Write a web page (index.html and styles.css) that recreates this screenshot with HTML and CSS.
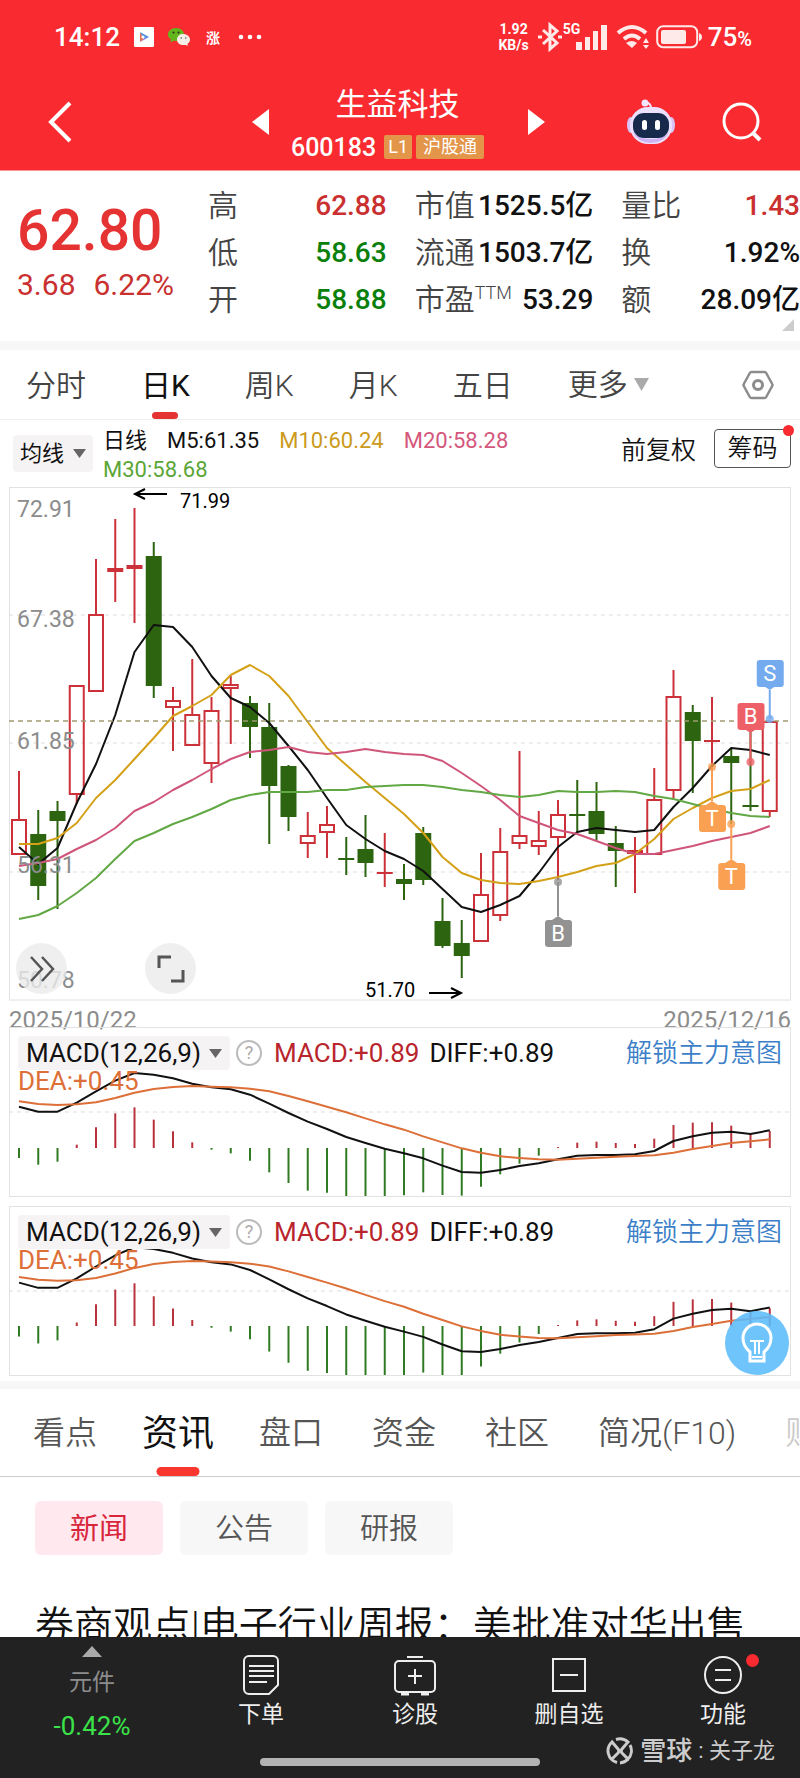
FILE: index.html
```html
<!DOCTYPE html>
<html lang="zh-CN">

<head>
  <meta charset="UTF-8">
  <meta name="viewport" content="width=device-width, initial-scale=1.0">
  <title>生益科技 600183</title>
  <link rel="stylesheet" href="styles.css">
</head>

<body>
  <div class="app">
    <header class="top">
      <div class="status">
        <span class="clock">14:12</span>
        <svg width="20" height="20" viewBox="0 0 20 20">
          <rect width="20" height="20" rx="1" fill="#fff" />
          <path d="M6 5v10l4-3z" fill="#e8705a" />
          <path d="M6 5l9 5-5 2z" fill="#4a8fe0" />
          <path d="M10 12l5-2-9 5z" fill="#7a58c8" />
          <circle cx="9" cy="10" r="1.6" fill="#fff" />
        </svg>
        <svg width="22" height="20" viewBox="0 0 22 20">
          <path d="M8 1c5 0 8 3 8 6.500s-3 6.500-8 6.500l-2.500-.3L2.500 15.500l.5-3C1 11 0 9.500 0 7.500 0 4 3 1 8 1z" fill="#63b51d" />
          <path d="M15 7c4 0 7 2.500 7 5.500 0 2-1 3.500-2.500 4.300l.3 2L17.500 18c-5.500.6-8.500-2-8.500-5.500S12 7 15 7z" fill="#f6efe8" />
          <circle cx="5.500" cy="5.500" r="1" fill="#222" />
          <circle cx="10.500" cy="5.500" r="1" fill="#222" />
          <circle cx="13.200" cy="11" r=".8" fill="#555" />
          <circle cx="17.800" cy="11" r=".8" fill="#555" />
        </svg>
        <span class="limit-up">涨</span>
        <svg width="24" height="6" viewBox="0 0 24 6" fill="#fff">
          <circle cx="3" cy="3" r="2.300" />
          <circle cx="12" cy="3" r="2.300" />
          <circle cx="21" cy="3" r="2.300" />
        </svg>
        <span class="net-speed">1.92<br>KB/s</span>
        <svg width="26" height="30" viewBox="0 0 26 30" fill="none" stroke="#ffeaea" stroke-width="3">
          <path d="M6 8l14 13-7 6V3l7 6L6 22" />
          <path d="M1 15h4M21 15h4" />
        </svg>
        <span class="signal">
          <span class="gen">5G</span>
          <svg width="31" height="25" viewBox="0 0 31 25" fill="#ffeaea">
            <path d="M0 17h6v8H0zM9 12h5v13H9zM17 6h5v19h-5zM25 0h6v25h-6z" />
          </svg>
        </span>
        <svg width="34" height="26" viewBox="0 0 34 26" fill="none" stroke="#ffeaea" stroke-width="4">
          <path d="M2 9q14-12 28 0M8 15q8-7 16 0" />
          <path d="M10 19q6-4 11 0l-5 5z" fill="#ffeaea" stroke="none" />
          <path d="M30 14l3 5h-6zM30 25l3-4h-6z" fill="#ffeaea" stroke="none" />
        </svg>
        <svg width="46" height="24" viewBox="0 0 46 24">
          <rect x="1.200" y="1.200" width="40" height="21" rx="6" fill="none" stroke="#ffeaea" stroke-width="2" />
          <rect x="5" y="5" width="25" height="14" rx="2" fill="#ffeaea" />
          <path d="M43 8q3 1 3 4t-3 4z" fill="#ffeaea" />
        </svg>
        <span class="battery">75<small>%</small></span>
      </div>

      <nav class="title-bar">
        <button class="icon-btn back" aria-label="返回">
          <svg width="24" height="42" viewBox="0 0 24 42" fill="none" stroke="#fff" stroke-width="4">
            <path d="M22 2L3 21l19 19" />
          </svg>
        </button>
        <button class="icon-btn" aria-label="上一只">
          <svg width="17" height="26" viewBox="0 0 17 26" fill="#fff">
            <path d="M17 0v26L0 13z" />
          </svg>
        </button>
        <div class="stock">
          <h1>生益科技</h1>
          <p><span class="code">600183</span><span class="tag">L1</span><span class="tag wide">沪股通</span></p>
        </div>
        <button class="icon-btn" aria-label="下一只">
          <svg width="17" height="26" viewBox="0 0 17 26" fill="#fff">
            <path d="M0 0v26l17-13z" />
          </svg>
        </button>
        <button class="icon-btn robot" aria-label="智能助手">
          <svg width="48" height="46" viewBox="0 0 48 46">
            <circle cx="18" cy="4" r="3.500" fill="#f3e4ff" />
            <path d="M18 4q6-1 6 6" fill="none" stroke="#f3e4ff" stroke-width="2" />
            <ellipse cx="4" cy="26" rx="4" ry="8" fill="#d9c4f5" />
            <ellipse cx="44" cy="26" rx="4" ry="8" fill="#d9c4f5" />
            <rect x="3" y="8" width="42" height="37" rx="18" fill="#ece2ff" />
            <path d="M5 32q6 12 19 12t19-12q-6 8-19 8T5 32z" fill="#cdb4f2" />
            <rect x="6" y="14" width="36" height="25" rx="11" fill="#182a4c" />
            <rect x="15" y="21" width="5" height="10" rx="2.500" fill="#fff" />
            <rect x="28" y="21" width="5" height="10" rx="2.500" fill="#fff" />
          </svg>
        </button>
        <button class="icon-btn" aria-label="搜索">
          <svg width="40" height="40" viewBox="0 0 40 40" fill="none" stroke="#fff" stroke-width="3">
            <circle cx="19" cy="19" r="17" />
            <path d="M31 31l7 7" stroke-width="4" />
          </svg>
        </button>
      </nav>
    </header>

    <main class="content">
      <section class="quote">
        <div class="price">
          <strong>62.80</strong>
          <p><span>3.68</span><span>6.22%</span></p>
        </div>
        <dl>
          <div><dt>高</dt><dd class="up">62.88</dd></div>
          <div><dt>低</dt><dd class="down">58.63</dd></div>
          <div><dt>开</dt><dd class="down">58.88</dd></div>
        </dl>
        <dl>
          <div><dt>市值</dt><dd>1525.5亿</dd></div>
          <div><dt>流通</dt><dd>1503.7亿</dd></div>
          <div><dt>市盈<sup>TTM</sup></dt><dd>53.29</dd></div>
        </dl>
        <dl>
          <div><dt>量比</dt><dd class="up">1.43</dd></div>
          <div><dt>换</dt><dd>1.92%</dd></div>
          <div><dt>额</dt><dd>28.09亿</dd></div>
        </dl>
        <span class="corner"></span>
      </section>

      <nav class="periods">
        <button>分时</button>
        <button class="active">日K</button>
        <button>周K</button>
        <button>月K</button>
        <button>五日</button>
        <label class="picker more">
          <select aria-label="更多周期"><option>更多</option></select>
          <svg width="15" height="13" viewBox="0 0 15 13" fill="#aaa"><path d="M0 0h15L7.500 13z" /></svg>
        </label>
        <button class="settings" aria-label="设置">
          <svg width="32" height="30" viewBox="0 0 32 30" fill="none" stroke="#8c8c8c" stroke-width="2.500">
            <path d="M9.500 2h13a2 2 0 0 1 1.700 1l6 11a2 2 0 0 1 0 2l-6 11a2 2 0 0 1-1.700 1h-13a2 2 0 0 1-1.700-1l-6-11a2 2 0 0 1 0-2l6-11a2 2 0 0 1 1.700-1z" />
            <circle cx="16" cy="15" r="4.500" stroke-width="3" />
          </svg>
        </button>
      </nav>

      <section class="averages">
        <label class="picker chip">
          <select aria-label="主图指标"><option>均线</option></select>
          <svg width="13" height="9" viewBox="0 0 13 9" fill="#666"><path d="M0 0h13L6.500 9z" /></svg>
        </label>
        <div class="legend">
          <span>日线</span>
          <span>M5:61.35</span>
          <span class="m10">M10:60.24</span>
          <span class="m20">M20:58.28</span>
          <span class="m30">M30:58.68</span>
        </div>
        <button class="adjust">前复权</button>
        <button class="chips-btn">筹码</button>
      </section>

      <section class="kline">
        <svg id="kline" viewBox="9 486 782 515"></svg>
        <div class="kline-tools">
          <button aria-label="展开">
            <svg width="26" height="26" viewBox="0 0 26 26" fill="none" stroke="#555" stroke-width="2.500">
              <path d="M2 1l11 12L2 25M13 1l11 12-11 12" />
            </svg>
          </button>
          <button aria-label="全屏">
            <svg width="28" height="28" viewBox="0 0 28 28" fill="none" stroke="#555" stroke-width="3">
              <path d="M2 13V2h12M26 15v11H14" />
            </svg>
          </button>
        </div>
      </section>
      <div class="dates"><time>2025/10/22</time><time>2025/12/16</time></div>

      <section class="macd">
        <svg id="macd-1" viewBox="9 0 782 170"></svg>
        <div class="macd-head">
          <label class="picker chip">
            <select aria-label="副图指标一"><option>MACD(12,26,9)</option></select>
            <svg width="13" height="9" viewBox="0 0 13 9" fill="#666"><path d="M0 0h13L6.500 9z" /></svg>
          </label>
          <button class="help" aria-label="说明">?</button>
          <span class="bar">MACD:+0.89</span>
          <span>DIFF:+0.89</span>
          <a href="#unlock">解锁主力意图</a>
          <span class="dea">DEA:+0.45</span>
        </div>
      </section>

      <section class="macd">
        <svg id="macd-2" viewBox="9 0 782 170"></svg>
        <div class="macd-head">
          <label class="picker chip">
            <select aria-label="副图指标二"><option>MACD(12,26,9)</option></select>
            <svg width="13" height="9" viewBox="0 0 13 9" fill="#666"><path d="M0 0h13L6.500 9z" /></svg>
          </label>
          <button class="help" aria-label="说明">?</button>
          <span class="bar">MACD:+0.89</span>
          <span>DIFF:+0.89</span>
          <a href="#unlock">解锁主力意图</a>
          <span class="dea">DEA:+0.45</span>
        </div>
        <button class="bulb" aria-label="提示">
          <svg width="32" height="42" viewBox="0 0 32 42" fill="none" stroke="#fff" stroke-width="3">
            <path d="M9 39V30C4 26 2 21 2 16a14 14 0 0 1 28 0c0 5-2 10-7 14v9z" />
            <path d="M9 19h14M14 19v13M18 19v13" stroke-width="2" />
            <path d="M11 35h10" stroke-width="2" />
          </svg>
        </button>
      </section>

      <nav class="info-tabs">
        <button>看点</button>
        <button class="active">资讯</button>
        <button>盘口</button>
        <button>资金</button>
        <button>社区</button>
        <button>简况(F10)</button>
        <button>财务</button>
      </nav>

      <div class="filters">
        <button class="active">新闻</button>
        <button>公告</button>
        <button>研报</button>
      </div>

      <a class="headline" href="#news">券商观点|电子行业周报：美批准对华出售</a>
    </main>

    <footer class="dock">
      <a class="sector" href="#sector">
        <svg width="20" height="11" viewBox="0 0 20 11" fill="#aaa"><path d="M10 0l10 11H0z" /></svg>
        <span>元件</span>
        <b>-0.42%</b>
      </a>
      <button>
        <svg width="38" height="42" viewBox="0 0 38 42" fill="none" stroke="#eee" stroke-width="2">
          <path d="M7 2h24a5 5 0 0 1 5 5v24l-9 9H7a5 5 0 0 1-5-5V7a5 5 0 0 1 5-5z" />
          <path d="M7 12h25M7 17h25M7 22h25M7 28h18" />
        </svg>
        下单
      </button>
      <button>
        <svg width="44" height="42" viewBox="0 0 44 42" fill="none" stroke="#eee" stroke-width="2">
          <rect x="2" y="7" width="40" height="31" rx="4" />
          <path d="M14 3h16M22 15v15M15 22h14" />
          <path d="M8 40h8M28 40h8" stroke-width="3" />
        </svg>
        诊股
      </button>
      <button>
        <svg width="36" height="42" viewBox="0 0 36 42" fill="none" stroke="#eee" stroke-width="2">
          <rect x="2" y="5" width="32" height="32" />
          <path d="M9 21h18" />
        </svg>
        删自选
      </button>
      <button class="dot">
        <svg width="40" height="42" viewBox="0 0 40 42" fill="none" stroke="#eee" stroke-width="2">
          <circle cx="20" cy="21" r="18" />
          <path d="M12 16h16M12 26h16" />
        </svg>
        功能
      </button>
      <span class="home-bar"></span>
      <span class="watermark">
        <svg width="28" height="28" viewBox="0 0 28 28" fill="none" stroke="#ccc" stroke-width="3">
          <path d="M11 25.500A12 12 0 0 1 6 5l6 7a3 3 0 0 1 0 4l-6 6" />
          <path d="M10 2.500A12 12 0 0 1 22 5l-6 7a3 3 0 0 0 0 4l6 6A12 12 0 0 0 24 8" />
          <path d="M14 26a12 12 0 0 0 8-4" />
        </svg>
        <b>雪球</b>: 关子龙
      </span>
    </footer>
  </div>

  <script src="charts.js"></script>
</body>

</html>
```
FILE: styles.css
```css
:root {
  --red: #f92b31;
  --up: #c9302f;
  --down: #0a800a;
  --ink: #111;
  --text: #444;
  --muted: #8c8c8c;
  --line: #e2e2e2;
  --band: #f7f7f7;
  --cjk: "Noto Sans CJK SC";
}

* {
  box-sizing: border-box;
}

body {
  margin: 0;
  background: #fff;
  color: var(--ink);
  font-family: Roboto, var(--cjk), sans-serif;
}

h1,
p,
dl,
dd {
  margin: 0;
}

button,
select {
  margin: 0;
  padding: 0;
  border: 0;
  background: none;
  color: inherit;
  font: inherit;
  appearance: none;
}

a {
  color: inherit;
  text-decoration: none;
}

svg {
  display: block;
  flex: none;
}

.app {
  display: flex;
  flex-direction: column;
  height: 100vh;
}

/* header */
.top {
  flex: none;
  background: var(--red);
  color: #fff;
  border-bottom: 1px solid #f2969a;
}

.status {
  display: flex;
  align-items: center;
  height: 74px;
  padding: 0 48px 0 54px;
}

.clock {
  margin-right: 14px;
  font-size: 26px;
  font-weight: 500;
}

.limit-up {
  margin: 0 18px 0 16px;
  font-size: 14px;
  font-weight: 700;
}

.status svg + svg {
  margin-left: 14px;
}

.net-speed {
  margin: 0 8px 0 auto;
  font-size: 14px;
  font-weight: 700;
  line-height: 16px;
  text-align: center;
}

.signal {
  display: flex;
  position: relative;
  padding-left: 13px;
  margin-right: 9px;
}

.gen {
  position: absolute;
  left: 0;
  top: -4px;
  font-size: 14px;
  font-weight: 700;
}

.status .signal ~ svg {
  margin-left: 0;
  margin-right: 6px;
}

.battery {
  font-size: 26px;
  font-weight: 500;
}

.battery small {
  font-size: 20px;
}

.title-bar {
  display: flex;
  align-items: center;
  height: 96px;
  padding: 0 38px 0 48px;
}

.back {
  margin-right: auto;
}

.stock {
  margin: 0 44px 0 22px;
  padding-top: 10px;
  text-align: center;
}

.stock h1 {
  padding-left: 20px;
  font-size: 31px;
  font-weight: 400;
  line-height: 40px;
}

.stock p {
  display: flex;
  gap: 4px;
  justify-content: center;
  align-items: center;
  height: 44px;
}

.code {
  margin-right: 4px;
  font-size: 25px;
  font-weight: 500;
}

.tag {
  padding: 0 4px;
  background: #e3954a;
  border-radius: 2px;
  font-size: 18px;
  line-height: 24px;
}

.tag.wide {
  padding: 0 7px;
}

.robot {
  margin: 0 47px 0 82px;
}

/* quote */
.content {
  flex: 1;
  min-height: 0;
  overflow: hidden;
}

.quote {
  position: relative;
  display: grid;
  grid-template-columns: 180px 1fr 1fr 1fr;
  column-gap: 28px;
  padding-top: 11px;
  height: 170px;
}

.price {
  padding: 17px 0 0 17px;
  color: var(--up);
}

.price strong {
  display: block;
  color: #e53333;
  font-size: 57px;
  font-weight: 500;
  line-height: 64px;
}

.price p {
  display: flex;
  gap: 18px;
  font-size: 30px;
  line-height: 44px;
}

.quote dl div {
  display: flex;
  justify-content: space-between;
  line-height: 47px;
}

.quote dt {
  color: var(--text);
  font-size: 30px;
  font-weight: 350;
  white-space: nowrap;
}

.quote dd {
  font-size: 28px;
  font-weight: 500;
  white-space: nowrap;
}

.quote sup {
  font-size: 18px;
  line-height: 0;
}

.quote .up {
  color: var(--up);
}

.quote .down {
  color: var(--down);
}

.corner {
  position: absolute;
  right: 6px;
  bottom: 10px;
  border: 6px solid;
  border-color: transparent #ccc #ccc transparent;
}

/* period tabs */
.periods {
  display: flex;
  align-items: center;
  gap: 55px;
  height: 79px;
  padding: 0 26px;
  border-top: 9px solid var(--band);
  border-bottom: 1px solid #eee;
  color: var(--text);
  font-size: 30px;
  font-weight: 350;
}

.periods button {
  position: relative;
  height: 69px;
  padding-bottom: 4px;
}

.periods .active {
  color: var(--ink);
  font-weight: 400;
}

.periods .active::after,
.info-tabs .active::after {
  content: '';
  position: absolute;
  left: 50%;
  bottom: 0;
  width: 26px;
  height: 7px;
  border-radius: 4px;
  background: #e53333;
  transform: translateX(-50%);
}

.periods .settings {
  margin-left: auto;
  padding: 0;
}

.picker {
  display: flex;
  align-items: center;
}

.more {
  gap: 6px;
}

.picker.chip {
  gap: 8px;
  background: #f6f3f4;
  border-radius: 4px;
}

/* moving averages */
.averages {
  display: flex;
  height: 66px;
  padding: 0 9px 0 13px;
  font-size: 22px;
}

.averages .chip {
  align-self: center;
  height: 37px;
  padding: 0 7px;
}

.legend {
  display: flex;
  flex: 1;
  flex-wrap: wrap;
  align-content: flex-start;
  column-gap: 20px;
  padding: 6px 0 0 10px;
  line-height: 29px;
}

.m10 {
  color: #cc9a1c;
}

.m20 {
  color: #d4577c;
}

.m30 {
  color: #5ba637;
}

.adjust {
  height: 55px;
  margin: 0 18px 0 0;
  font-size: 25px;
  font-weight: 350;
}

.chips-btn {
  position: relative;
  width: 77px;
  height: 39px;
  margin-top: 9px;
  border: 1px solid #555;
  border-radius: 4px;
  font-size: 25px;
  font-weight: 350;
  line-height: 36px;
}

.chips-btn::after,
.dot::after {
  content: '';
  position: absolute;
  top: -5px;
  right: -4px;
  width: 11px;
  height: 11px;
  border-radius: 50%;
  background: var(--red);
}

/* charts */
.kline,
.macd {
  position: relative;
  display: grid;
  margin: 0 9px;
}

.kline > *,
.macd > * {
  grid-area: 1 / 1;
}

.kline > svg,
.macd > svg {
  width: 100%;
  height: auto;
}

.kline-tools {
  display: flex;
  align-self: end;
  justify-self: start;
  gap: 78px;
  padding: 0 0 7px 7px;
}

.kline-tools button {
  display: grid;
  place-items: center;
  width: 51px;
  height: 51px;
  border-radius: 50%;
  background: rgba(235, 235, 235, .8);
}

.dates {
  display: flex;
  justify-content: space-between;
  height: 26px;
  padding: 0 9px;
  color: var(--muted);
  font-size: 24px;
  line-height: 38px;
}

.macd + .macd {
  margin-top: 9px;
}

.macd-head {
  display: flex;
  flex-wrap: wrap;
  align-items: center;
  align-content: flex-start;
  padding: 9px 9px 0;
  font-size: 26px;
  line-height: 34px;
}

.macd-head .chip {
  height: 34px;
  padding: 0 8px;
}

.help {
  width: 26px;
  height: 26px;
  margin: 0 12px 0 6px;
  border: 2px solid #bbb;
  border-radius: 50%;
  color: #aaa;
  font-size: 18px;
  line-height: 22px;
}

.bar {
  margin-right: 10px;
  color: #b9252c;
}

.macd-head a {
  margin-left: auto;
  color: #3c7fc8;
  font-weight: 350;
}

.macd-head .dea {
  flex-basis: 100%;
  color: #dd6f38;
  line-height: 22px;
}

.bulb {
  position: absolute;
  right: 2px;
  bottom: 1px;
  display: grid;
  place-items: center;
  width: 64px;
  height: 64px;
  border-radius: 50%;
  background: rgba(91, 188, 252, .88);
}

/* news */
.info-tabs {
  display: flex;
  align-items: center;
  gap: 49px;
  height: 96px;
  margin-top: 5px;
  padding-left: 33px;
  border-top: 8px solid var(--band);
  border-bottom: 1px solid #ccc;
  color: #555;
  font-size: 32px;
  font-weight: 350;
  white-space: nowrap;
  overflow: hidden;
}

.info-tabs button {
  position: relative;
  flex: none;
  height: 87px;
  padding-bottom: 6px;
}

.info-tabs button:last-child {
  opacity: .3;
}

.info-tabs .active {
  margin: 0 -4px;
  color: var(--ink);
  font-size: 36px;
  font-weight: 400;
}

.info-tabs .active::after {
  width: 43px;
  height: 9px;
  border-radius: 5px;
  background: #fa372f;
}

.filters {
  display: flex;
  gap: 17px;
  padding: 24px 35px 0;
}

.filters button {
  width: 128px;
  height: 54px;
  padding-bottom: 4px;
  border-radius: 6px;
  background: var(--band);
  color: #555;
  font-size: 29px;
  font-weight: 350;
}

.filters .active {
  background: #ffe9ef;
  color: #d9263c;
  font-weight: 400;
}

.headline {
  display: block;
  padding: 43px 35px 0;
  font-size: 39px;
  font-weight: 350;
  line-height: 56px;
  white-space: nowrap;
}

/* bottom dock */
.dock {
  position: relative;
  flex: none;
  display: grid;
  grid-template-columns: 184fr repeat(4, 154fr);
  height: 141px;
  background: #222;
  color: #eee;
  font-size: 23px;
}

.dock button,
.sector {
  display: flex;
  flex-direction: column;
  align-items: center;
}

.dock button {
  position: relative;
  gap: 2px;
  padding-top: 17px;
  line-height: 34px;
}

.sector {
  padding-top: 9px;
  color: var(--muted);
}

.sector span {
  margin-top: 9px;
  line-height: 34px;
}

.sector b {
  color: #3be24a;
  font-size: 26px;
  font-weight: 400;
  line-height: 52px;
}

.dot::after {
  top: 17px;
  right: 41px;
  width: 13px;
  height: 13px;
}

.home-bar {
  position: absolute;
  bottom: 12px;
  left: 50%;
  width: 280px;
  height: 8px;
  border-radius: 4px;
  background: #b3b3b3;
  transform: translateX(-50%);
}

.watermark {
  position: absolute;
  right: 25px;
  bottom: 10px;
  display: flex;
  align-items: center;
  gap: 6px;
  color: #ccc;
  font-size: 22px;
  line-height: 34px;
}

.watermark b {
  font-size: 26px;
  font-weight: 500;
}

/* chart drawing */
.frame {
  fill: none;
  stroke: var(--line);
}

.grid-line {
  stroke: #ddd;
  stroke-dasharray: 4 4;
}

.last-price {
  stroke: #a09a70;
  stroke-width: 1.5;
  stroke-dasharray: 5 4;
}

.axis {
  fill: var(--muted);
  font-size: 23px;
}

.extreme {
  fill: #000;
  font-size: 20px;
}

.arrow {
  fill: none;
  stroke: #000;
  stroke-width: 2;
}

.rise {
  fill: none;
  stroke: #cc3038;
  stroke-width: 2;
}

.fall {
  fill: #2d6410;
  stroke: #2d6410;
  stroke-width: 2;
}

.curve {
  fill: none;
  stroke-width: 2;
  stroke-linejoin: round;
}

.marker {
  fill: #fff;
  font-size: 22px;
  text-anchor: middle;
}
```
FILE: charts.js
```js
const FIRST_X = 19;
const STEP = 19.25;

// [high, body top, body bottom, low, direction]
const candles = [
  [771, 819, 855, 855, 1], [810, 834, 886, 900, 0], [801, 811, 821, 909, 0], [685, 685, 795, 804, 1],
  [559, 614, 692, 692, 1], [519, 568, 572, 602, 1], [508, 565, 569, 623, 1], [542, 556, 686, 698, 0],
  [687, 700, 708, 751, 1], [659, 714, 746, 746, 1], [697, 710, 764, 783, 1], [676, 684, 689, 744, 1],
  [696, 703, 727, 758, 0], [703, 727, 786, 844, 0], [765, 766, 817, 831, 0], [812, 835, 844, 858, 1],
  [806, 824, 833, 858, 1], [837, 859, 859, 875, 0], [815, 849, 863, 877, 0], [833, 873, 873, 887, 1],
  [864, 879, 884, 900, 0], [827, 833, 880, 885, 0], [898, 921, 946, 948, 0], [920, 943, 956, 978, 0],
  [853, 894, 942, 942, 1], [828, 851, 916, 921, 1], [751, 835, 844, 849, 1], [811, 840, 847, 855, 1],
  [800, 814, 838, 880, 1], [780, 815, 815, 832, 0], [782, 811, 834, 840, 0], [826, 843, 851, 887, 0],
  [837, 850, 854, 893, 1], [768, 799, 855, 855, 1], [670, 696, 791, 798, 1], [705, 712, 741, 793, 0],
  [697, 741, 741, 767, 1], [748, 756, 763, 824, 0], [732, 806, 806, 811, 0], [721, 721, 812, 817, 1]
];

const averages = {
  '#111': [847, 864, 848, 803, 764, 715, 652, 625, 627, 647, 676, 698, 707, 723, 746, 770, 798, 825, 839, 851,
    859, 871, 889, 907, 912, 905, 896, 873, 847, 832, 828, 830, 832, 830, 807, 788, 766, 748, 750, 755],
  '#d4a017': [844, 844, 838, 823, 798, 780, 759, 738, 716, 706, 695, 675, 665, 676, 696, 722, 748, 765, 782, 798,
    814, 833, 857, 873, 880, 883, 884, 881, 877, 872, 866, 863, 854, 839, 819, 808, 798, 791, 789, 780],
  '#d0557a': [866, 863, 859, 849, 840, 828, 811, 802, 790, 780, 769, 759, 752, 750, 747, 752, 754, 752, 749, 752,
    754, 755, 761, 773, 786, 800, 816, 823, 830, 834, 841, 848, 854, 854, 850, 846, 841, 837, 833, 826],
  '#62a844': [919, 915, 906, 893, 878, 859, 841, 833, 824, 817, 809, 800, 795, 792, 792, 792, 790, 790, 787, 786,
    785, 785, 787, 790, 792, 795, 797, 795, 791, 792, 792, 791, 792, 796, 799, 804, 809, 813, 816, 817]
};

const diff = [124, 109, 109, 136, 170, 202, 225, 220, 209, 193, 182, 176, 160, 133, 105, 79, 57, 33, 15, -2,
  -16, -31, -53, -72, -74, -66, -54, -46, -34, -23, -21, -21, -19, -9, 21, 35, 46, 49, 42, 53];
const dea = [140, 132, 129, 131, 137, 150, 166, 177, 183, 186, 184, 182, 178, 170, 156, 140, 124, 107, 89, 71,
  55, 35, 17, -1, -14, -25, -30, -34, -35, -32, -29, -26, -24, -22, -14, -3, 6, 15, 20, 26];
const bars = [-30, -50, -41, 10, 62, 104, 122, 85, 50, 17, -5, -16, -38, -73, -105, -128, -134, -145, -145, -145,
  -142, -133, -141, -143, -116, -79, -47, -23, 3, 16, 19, 15, 12, 28, 69, 76, 77, 67, 42, 51];

const xAt = i => FIRST_X + i * STEP;
const line = (x1, y1, x2, y2, attrs) => `<line x1="${x1}" y1="${y1}" x2="${x2}" y2="${y2}" ${attrs}/>`;
const curve = (ys, color) =>
  `<polyline class="curve" stroke="${color}" points="${ys.map((y, i) => `${xAt(i)},${y}`).join(' ')}"/>`;

function candle([high, top, bottom, low, up], i) {
  const x = xAt(i);
  const cls = `class="${up ? 'rise' : 'fall'}"`;
  if (top === bottom) {
    return line(x, high, x, low, cls) + line(x - 8, top, x + 8, top, cls);
  }
  return line(x, high, x, top, cls) + line(x, bottom, x, low, cls) +
    `<rect ${cls} x="${x - 7}" y="${top + 1}" width="14" height="${bottom - top - 2}"/>`;
}

// Trade flag: square label with a stem pointing at the candle
function flag(i, y, target, label, color) {
  const x = xAt(i);
  const down = target > y;
  const edge = down ? y + 13 : y - 13;
  const tip = down ? edge + 4 : edge - 4;
  return `<g fill="${color}" stroke="none">
    ${line(x, tip, x, target, `stroke="${color}" stroke-width="2"`)}
    <circle cx="${x}" cy="${target}" r="4" fill-opacity=".8"/>
    <rect x="${x - 13}" y="${y - 13}" width="27" height="27" rx="3"/>
    <path d="M${x - 6} ${edge}L${x} ${tip}L${x + 6} ${edge}z"/>
    <text class="marker" x="${x}" y="${y + 8}">${label}</text></g>`;
}

function drawKline() {
  const ticks = [[72.91, 517], [67.38, 627], [61.85, 749], [56.31, 873], [50.78, 988]];
  document.querySelector('#kline').innerHTML =
    '<rect class="frame" x="9.5" y="487.5" width="781" height="512.5"/>' +
    [615, 743, 872].map(y => line(9, y, 791, y, 'class="grid-line"')).join('') +
    candles.map(candle).join('') +
    Object.entries(averages).map(([color, ys]) => curve(ys, color)).join('') +
    line(9, 721, 791, 721, 'class="last-price"') +
    ticks.map(([v, y]) => `<text class="axis" x="17" y="${y}">${v}</text>`).join('') +
    '<path class="arrow" d="M167 494H135M145 489L135 494L145 499"/>' +
    '<text class="extreme" x="180" y="508">71.99</text>' +
    '<path class="arrow" d="M429 993H461M451 988L461 993L451 998"/>' +
    '<text class="extreme" x="365" y="997">51.70</text>' +
    flag(28, 933, 882, 'B', '#929292') +
    flag(36, 818, 767, 'T', '#f9a053') +
    flag(37, 876, 824, 'T', '#f9a053') +
    flag(38, 716, 762, 'B', '#ee6068') +
    flag(39, 673, 719, 'S', '#74aaee');
}

function drawMacd(id, zero, scale) {
  const toY = v => zero - v * scale / 3;
  document.querySelector(id).innerHTML =
    '<rect class="frame" x="9.5" y=".5" width="781" height="169"/>' +
    line(9, 85, 791, 85, 'class="grid-line"') +
    bars.map((v, i) => line(xAt(i), zero, xAt(i), Math.min(toY(v), 169),
      `stroke="${v > 0 ? '#b8323c' : '#2f7a22'}" stroke-width="2"`)).join('') +
    curve(diff.map(toY), '#111') +
    curve(dea.map(toY), '#dd6f38');
}

drawKline();
drawMacd('#macd-1', 121, 1);
drawMacd('#macd-2', 120, 1.05);
```
